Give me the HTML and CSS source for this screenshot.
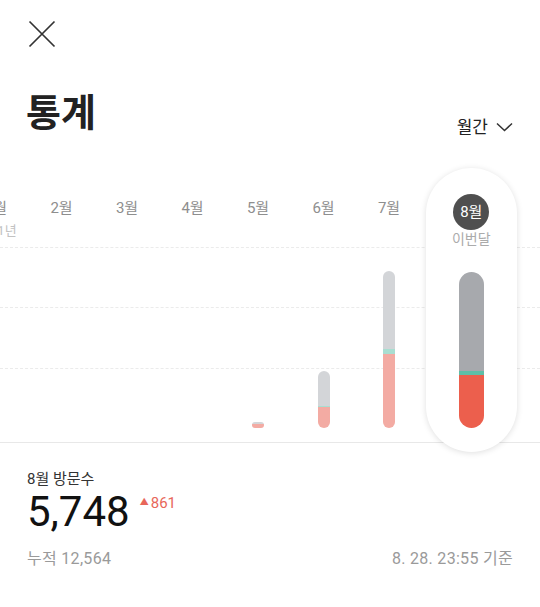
FILE: index.html
```html
<!DOCTYPE html>
<html lang="ko">
<head>
    <meta charset="UTF-8">
    <meta name="viewport" content="width=device-width, initial-scale=1.0">
    <title>통계</title>
    <link rel="stylesheet" href="styles.css">
</head>
<body>
    <header class="top-bar">
        <button class="close-btn" aria-label="닫기">
            <svg width="28" height="28" viewBox="0 0 28 28">
                <path d="M1.5 1.5 L26.5 26.5 M26.5 1.5 L1.5 26.5" stroke="#333" stroke-width="1.7" fill="none"/>
            </svg>
        </button>
    </header>

    <div class="title-row">
        <h1 class="page-title">통계</h1>
        <button class="period-select">
            <span>월간</span>
            <svg width="17" height="10" viewBox="0 0 17 10">
                <path d="M1 1.5 L8.5 8.5 L16 1.5" stroke="#333" stroke-width="1.5" fill="none"/>
            </svg>
        </button>
    </div>

    <section class="chart">
        <div class="grid-line line-1"></div>
        <div class="grid-line line-2"></div>
        <div class="grid-line line-3"></div>

        <div class="columns">
            <div class="col">
                <div class="month">1월</div>
                <div class="sub">2021년</div>
                <div class="bar-area"></div>
            </div>
            <div class="col">
                <div class="month">2월</div>
                <div class="bar-area"></div>
            </div>
            <div class="col">
                <div class="month">3월</div>
                <div class="bar-area"></div>
            </div>
            <div class="col">
                <div class="month">4월</div>
                <div class="bar-area"></div>
            </div>
            <div class="col">
                <div class="month">5월</div>
                <div class="bar-area">
                    <div class="bar tiny">
                        <i class="seg rest" style="height:2px"></i>
                        <i class="seg visit" style="height:4px"></i>
                    </div>
                </div>
            </div>
            <div class="col">
                <div class="month">6월</div>
                <div class="bar-area">
                    <div class="bar">
                        <i class="seg rest" style="height:35px"></i>
                        <i class="seg new" style="height:1px"></i>
                        <i class="seg visit" style="height:21px"></i>
                    </div>
                </div>
            </div>
            <div class="col">
                <div class="month">7월</div>
                <div class="bar-area">
                    <div class="bar">
                        <i class="seg rest" style="height:78px"></i>
                        <i class="seg new" style="height:5px"></i>
                        <i class="seg visit" style="height:74px"></i>
                    </div>
                </div>
            </div>
            <div class="col current">
                <div class="month-badge">8월</div>
                <div class="sub">이번달</div>
                <div class="bar-area">
                    <div class="bar wide">
                        <i class="seg rest" style="height:99px"></i>
                        <i class="seg new" style="height:4px"></i>
                        <i class="seg visit" style="height:53px"></i>
                    </div>
                </div>
            </div>
        </div>
    </section>

    <section class="summary">
        <div class="summary-label">8월 방문수</div>
        <div class="summary-value">
            <span class="count">5,748</span>
            <span class="delta"><span class="arrow">▲</span>861</span>
        </div>
        <div class="summary-foot">
            <span>누적 12,564</span>
            <span>8. 28. 23:55 기준</span>
        </div>
    </section>
</body>
</html>
```

FILE: styles.css
```css
body {
    margin: 0;
    background-color: #fff;
    font-family: Roboto, "Noto Sans CJK KR", sans-serif;
    color: #222;
    overflow: hidden;
}
button {
    background: none;
    border: none;
    padding: 0;
    font: inherit;
    color: inherit;
    cursor: pointer;
}

.top-bar {
    height: 68px;
    padding: 20px 0 0 28px;
    box-sizing: border-box;
}
.close-btn svg {
    display: block;
}

.title-row {
    display: flex;
    justify-content: space-between;
    align-items: flex-end;
    height: 100px;
    padding: 23px 27px 32px 26px;
    box-sizing: border-box;
}
.page-title {
    margin: 0;
    font-size: 38px;
    line-height: 45px;
    font-weight: 700;
    color: #222;
}
.period-select {
    display: flex;
    align-items: center;
    gap: 8px;
    font-size: 17px;
    line-height: 24px;
    color: #222;
    margin-bottom: -3px;
}
.period-select svg {
    display: block;
}

/* chart */
.chart {
    position: relative;
    height: 274px;
    border-bottom: 1px solid #e8e8e8;
}
.grid-line {
    position: absolute;
    left: 0;
    right: 0;
    border-top: 1px dashed #ebebeb;
}
.line-1 { top: 79px; }
.line-2 { top: 139px; }
.line-3 { top: 200px; }

.columns {
    position: relative;
    display: flex;
    height: 100%;
    margin-left: -36.75px;
}
.col {
    flex: none;
    width: 65.5px;
    display: flex;
    flex-direction: column;
    align-items: center;
    padding: 25px 0 14px;
    box-sizing: border-box;
}
.month {
    font-size: 15px;
    line-height: 30px;
    color: #8e8e8e;
    white-space: nowrap;
}
.sub {
    font-size: 13px;
    line-height: 16px;
    color: #c2c2c2;
    white-space: nowrap;
}
.bar-area {
    flex: 1;
    display: flex;
    align-items: flex-end;
    justify-content: center;
}
.bar {
    width: 12px;
    border-radius: 6px;
    overflow: hidden;
    display: flex;
    flex-direction: column;
}
.bar.tiny {
    border-radius: 3px;
}
.seg {
    display: block;
}
.seg.rest { background-color: #d3d5d8; }
.seg.new { background-color: #a9ded1; }
.seg.visit { background-color: #f3aba3; }

.col.current {
    position: relative;
    z-index: 1;
    width: 91px;
    height: 284px;
    margin-left: 4px;
    padding: 26px 0 24px;
    background-color: #fff;
    border-radius: 46px;
    box-shadow: 0 1px 6px rgba(0, 0, 0, 0.13);
}
.month-badge {
    width: 36px;
    height: 36px;
    border-radius: 50%;
    background-color: #4f4f4f;
    color: #fff;
    font-size: 15px;
    line-height: 36px;
    text-align: center;
}
.col.current .sub {
    font-size: 14px;
    line-height: 18px;
    color: #ababab;
}
.bar.wide {
    width: 25px;
    border-radius: 12.5px;
}
.bar.wide .rest { background-color: #a7a9ad; }
.bar.wide .new { background-color: #5ebfa8; }
.bar.wide .visit { background-color: #ec5f4d; }

/* summary */
.summary {
    padding: 26px 27px 0;
}
.summary-label {
    font-size: 15px;
    line-height: 20px;
    color: #333;
}
.summary-value {
    display: flex;
    align-items: flex-start;
    gap: 10px;
}
.count {
    font-size: 42px;
    line-height: 46px;
    color: #111;
}
.delta {
    margin-top: 3px;
    font-size: 15px;
    line-height: 20px;
    color: #e8675a;
}
.delta .arrow {
    font-size: 9px;
    vertical-align: 3px;
    margin-right: 2px;
}
.summary-foot {
    display: flex;
    justify-content: space-between;
    margin-top: 14px;
    font-size: 16px;
    line-height: 20px;
    letter-spacing: 0.3px;
    color: #9a9a9a;
}
```
